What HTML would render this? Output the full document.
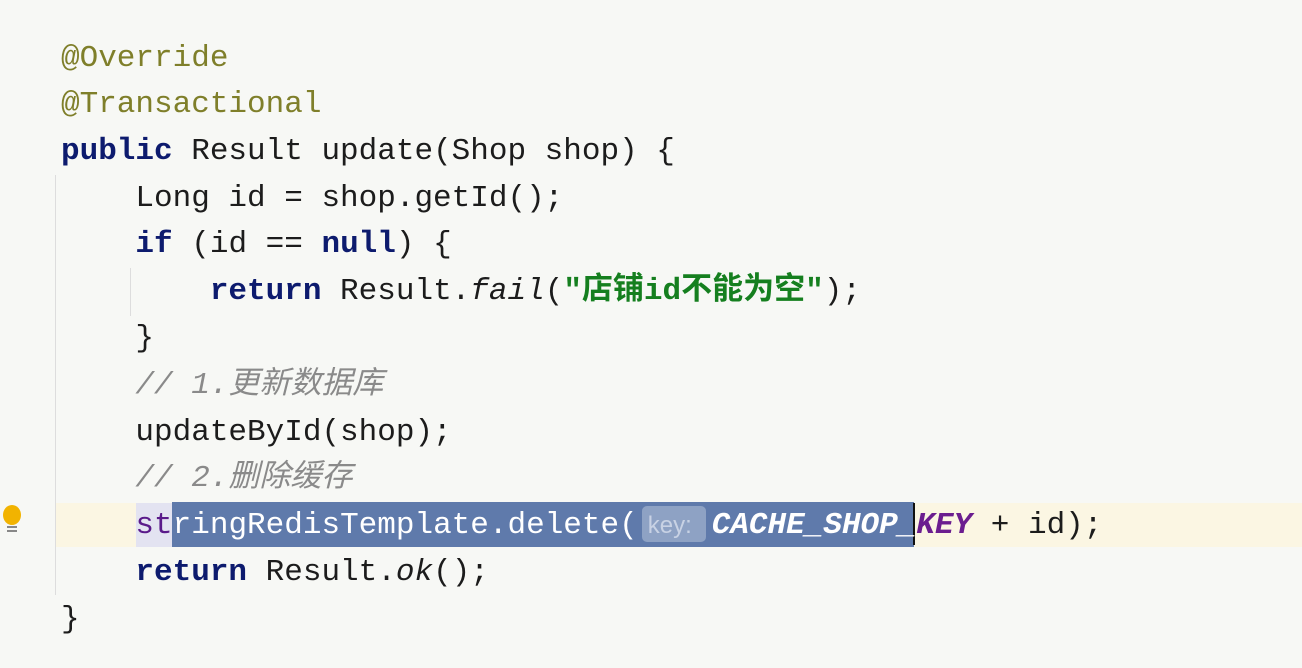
<!DOCTYPE html>
<html><head><meta charset="utf-8"><style>
body{margin:0;width:1302px;height:668px;background:#f7f8f5;overflow:hidden;position:relative;font-family:"Liberation Mono","Noto Sans CJK SC",monospace;font-size:31px;color:#1c1c1c}
.l{position:absolute;left:61px;height:46px;line-height:46px;white-space:pre}
.kw{color:#0d1b6e;font-weight:bold}
.an{color:#7f7f2a}
.cm{color:#8a8a8a;font-style:italic}
.st{color:#157f1f;font-weight:bold}
.it{font-style:italic}
.cst{color:#6b1d8f;font-style:italic;font-weight:bold}
</style></head><body>
<div style="position:absolute;left:55px;top:503px;width:1247px;height:44px;background:#fbf6e3"></div>
<div style="position:absolute;left:136px;top:503px;width:36px;height:44px;background:#e3e3f1"></div>
<div style="position:absolute;left:172px;top:502px;width:742px;height:45px;background:#5f7aab"></div>
<div style="position:absolute;left:642px;top:506px;width:64px;height:36px;background:#8ea2c4;border-radius:5px"></div>
<div style="position:absolute;left:913px;top:503px;width:2px;height:42px;background:#111"></div>
<div style="position:absolute;left:55px;top:175px;width:1px;height:420px;background:#ddd"></div>
<div style="position:absolute;left:130px;top:268px;width:1px;height:48px;background:#ddd"></div>
<svg style="position:absolute;left:0;top:503px" width="24" height="34"><ellipse cx="12" cy="12" rx="9" ry="10" fill="#f2b300"/><rect x="7" y="23" width="10" height="2" fill="#888"/><rect x="7" y="27" width="10" height="2" fill="#888"/></svg>
<div class="l an" style="top:36px">@Override</div>
<div class="l an" style="top:82px">@Transactional</div>
<div class="l" style="top:129px"><span class="kw">public</span> Result update(Shop shop) {</div>
<div class="l" style="top:176px">    Long id = shop.getId();</div>
<div class="l" style="top:222px">    <span class="kw">if</span> (id == <span class="kw">null</span>) {</div>
<div class="l" style="top:269px">        <span class="kw">return</span> Result.<span class="it">fail</span>(<span class="st">"店铺id不能为空"</span>);</div>
<div class="l" style="top:316px">    }</div>
<div class="l cm" style="top:363px">    // 1.更新数据库</div>
<div class="l" style="top:410px">    updateById(shop);</div>
<div class="l cm" style="top:456px">    // 2.删除缓存</div>
<div class="l" style="top:503px">    <span style="color:#5a1a8a">st</span><span style="color:#fff">ringRedisTemplate.delete(</span><span style="display:inline-block;width:74px;text-indent:10px;font-family:'Liberation Sans',sans-serif;font-size:24px;color:#c8d2e4">key:</span><span style="color:#fff;font-style:italic;font-weight:bold">CACHE_SHOP_</span><span class="cst">KEY</span> + id);</div>
<div class="l" style="top:550px">    <span class="kw">return</span> Result.<span class="it">ok</span>();</div>
<div class="l" style="top:597px">}</div>
</body></html>
